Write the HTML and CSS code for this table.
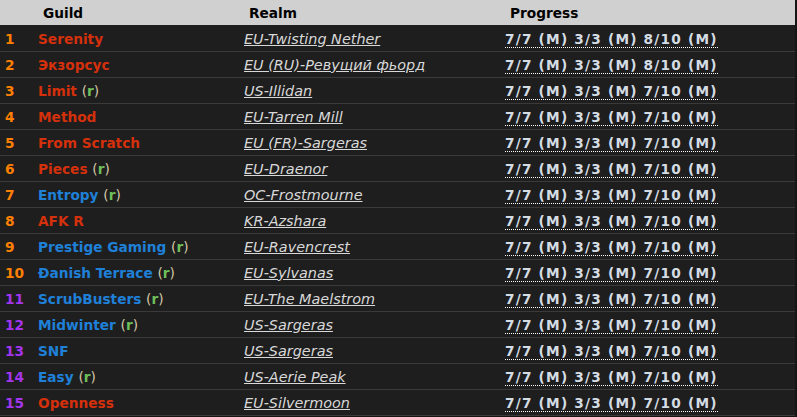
FILE: index.html
```html
<!DOCTYPE html>
<html>
<head>
<meta charset="utf-8">
<link rel="stylesheet" href="styles.css">
</head>
<body>
<div class="table">
  <div class="row head">
    <div class="cell"></div>
    <div class="cell">Guild</div>
    <div class="cell">Realm</div>
    <div class="cell">Progress</div>
  </div>
  <div class="row"><div class="cell rank leg">1</div><div class="cell guild horde">Serenity</div><div class="cell"><a class="realm">EU-Twisting Nether</a></div><div class="cell"><span class="prog">7/7 (M) 3/3 (M) 8/10 (M)</span></div></div>
  <div class="row"><div class="cell rank leg">2</div><div class="cell guild horde">Экзорсус</div><div class="cell"><a class="realm">EU (RU)-Ревущий фьорд</a></div><div class="cell"><span class="prog">7/7 (M) 3/3 (M) 8/10 (M)</span></div></div>
  <div class="row"><div class="cell rank leg">3</div><div class="cell guild horde">Limit <span class="r">(<b>r</b>)</span></div><div class="cell"><a class="realm">US-Illidan</a></div><div class="cell"><span class="prog">7/7 (M) 3/3 (M) 7/10 (M)</span></div></div>
  <div class="row"><div class="cell rank leg">4</div><div class="cell guild horde">Method</div><div class="cell"><a class="realm">EU-Tarren Mill</a></div><div class="cell"><span class="prog">7/7 (M) 3/3 (M) 7/10 (M)</span></div></div>
  <div class="row"><div class="cell rank leg">5</div><div class="cell guild horde">From Scratch</div><div class="cell"><a class="realm">EU (FR)-Sargeras</a></div><div class="cell"><span class="prog">7/7 (M) 3/3 (M) 7/10 (M)</span></div></div>
  <div class="row"><div class="cell rank leg">6</div><div class="cell guild horde">Pieces <span class="r">(<b>r</b>)</span></div><div class="cell"><a class="realm">EU-Draenor</a></div><div class="cell"><span class="prog">7/7 (M) 3/3 (M) 7/10 (M)</span></div></div>
  <div class="row"><div class="cell rank leg">7</div><div class="cell guild alli">Entropy <span class="r">(<b>r</b>)</span></div><div class="cell"><a class="realm">OC-Frostmourne</a></div><div class="cell"><span class="prog">7/7 (M) 3/3 (M) 7/10 (M)</span></div></div>
  <div class="row"><div class="cell rank leg">8</div><div class="cell guild horde">AFK R</div><div class="cell"><a class="realm">KR-Azshara</a></div><div class="cell"><span class="prog">7/7 (M) 3/3 (M) 7/10 (M)</span></div></div>
  <div class="row"><div class="cell rank leg">9</div><div class="cell guild alli">Prestige Gaming <span class="r">(<b>r</b>)</span></div><div class="cell"><a class="realm">EU-Ravencrest</a></div><div class="cell"><span class="prog">7/7 (M) 3/3 (M) 7/10 (M)</span></div></div>
  <div class="row"><div class="cell rank leg">10</div><div class="cell guild alli">Ðanish Terrace <span class="r">(<b>r</b>)</span></div><div class="cell"><a class="realm">EU-Sylvanas</a></div><div class="cell"><span class="prog">7/7 (M) 3/3 (M) 7/10 (M)</span></div></div>
  <div class="row"><div class="cell rank epic">11</div><div class="cell guild alli">ScrubBusters <span class="r">(<b>r</b>)</span></div><div class="cell"><a class="realm">EU-The Maelstrom</a></div><div class="cell"><span class="prog">7/7 (M) 3/3 (M) 7/10 (M)</span></div></div>
  <div class="row"><div class="cell rank epic">12</div><div class="cell guild alli">Midwinter <span class="r">(<b>r</b>)</span></div><div class="cell"><a class="realm">US-Sargeras</a></div><div class="cell"><span class="prog">7/7 (M) 3/3 (M) 7/10 (M)</span></div></div>
  <div class="row"><div class="cell rank epic">13</div><div class="cell guild alli">SNF</div><div class="cell"><a class="realm">US-Sargeras</a></div><div class="cell"><span class="prog">7/7 (M) 3/3 (M) 7/10 (M)</span></div></div>
  <div class="row"><div class="cell rank epic">14</div><div class="cell guild alli">Easy <span class="r">(<b>r</b>)</span></div><div class="cell"><a class="realm">US-Aerie Peak</a></div><div class="cell"><span class="prog">7/7 (M) 3/3 (M) 7/10 (M)</span></div></div>
  <div class="row"><div class="cell rank epic">15</div><div class="cell guild horde">Openness</div><div class="cell"><a class="realm">EU-Silvermoon</a></div><div class="cell"><span class="prog">7/7 (M) 3/3 (M) 7/10 (M)</span></div></div>
</div>
</body>
</html>
```

FILE: styles.css
```css
html, body {
  margin: 0;
  padding: 0;
  background: #151515;
}
body {
  font-family: "DejaVu Sans", Verdana, sans-serif;
  font-size: 13.7px;
}
.table {
  width: 795px;
  background: #1e1e1e;
}
.row {
  display: grid;
  grid-template-columns: 33px 206px 261px 1fr;
  height: 25px;
  border-bottom: 1px solid #3a3a3a;
  align-items: center;
}
.row.head {
  background: #d0d0d0;
  color: #000;
  font-weight: bold;
  border-bottom: 1px solid #1e1e1e;
}
.cell {
  padding-left: 5px;
  white-space: nowrap;
}
.head .cell {
  padding-left: 10px;
}
.rank {
  font-weight: bold;
}
.leg { color: #ff8000; }
.epic { color: #a335ee; }
.guild {
  font-weight: bold;
}
.horde { color: #d4300c; }
.alli { color: #1f80d8; }
.r {
  color: #d6c9a8;
  font-weight: normal;
}
.r b {
  color: #6fbf5a;
  font-weight: bold;
}
.realm {
  color: #d8d8d8;
  font-style: italic;
  font-size: 14.4px;
  text-decoration: underline;
}
.prog {
  color: #d4dce4;
  font-weight: bold;
  letter-spacing: 1.2px;
  border-bottom: 1px dotted #ffffff;
}
```
